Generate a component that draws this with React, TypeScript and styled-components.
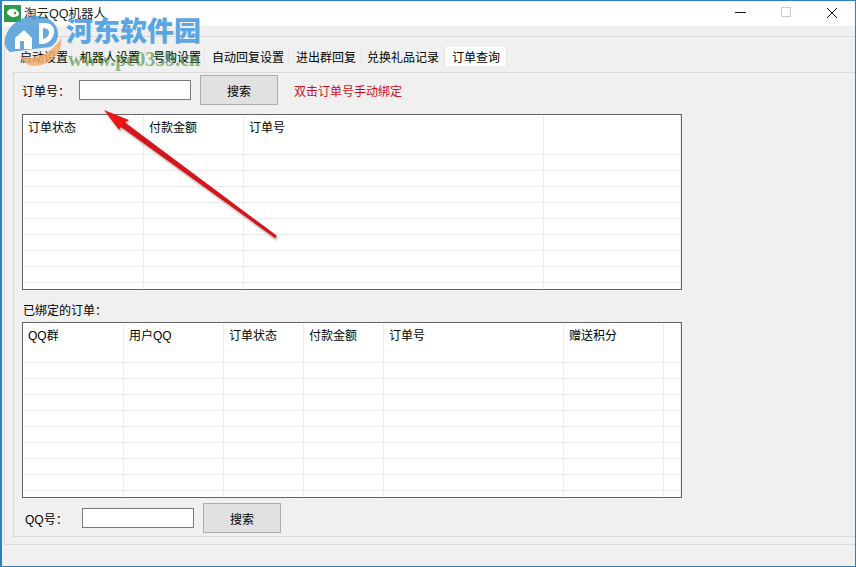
import React from "react"
import styled, { createGlobalStyle } from "styled-components"

const GlobalStyle = createGlobalStyle`
  html, body {
    margin: 0;
    padding: 0;
    overflow: hidden;
    background: #f0f0f0;
  }
  body, button, input {
    font-family: "Liberation Sans", "Noto Sans CJK SC", sans-serif;
    font-size: 12px;
    color: #000;
  }
`

const Window = styled.div`
  position: relative;
  box-sizing: border-box;
  width: 856px;
  height: 567px;
  display: flex;
  flex-direction: column;
  background: #f0f0f0;
  border-style: solid;
  border-color: #2b80c0;
  border-width: 1px 1px 1px 2px;
  overflow: hidden;
`

const TitleBar = styled.div`
  height: 25px;
  flex: none;
  background: #fff;
  display: flex;
  align-items: center;
  padding-left: 2px;
`

const TitleText = styled.span`
  margin: 0 0 2px 3px;
  font-size: 12.5px;
  color: #222;
`

const WindowButtons = styled.div`
  margin-left: auto;
  display: flex;
  height: 100%;
`

const WindowButton = styled.div`
  width: 46px;
  display: flex;
  align-items: center;
  justify-content: center;
  padding-bottom: 2px;
`

const Frame = styled.div`
  flex: 1;
  margin: 10px 0 21px 2px;
  border-style: solid;
  border-color: #d9d9d9;
  border-width: 1px 0 1px 1px;
  display: flex;
  flex-direction: column;
`

const TabRow = styled.div`
  flex: none;
  height: 25px;
  margin-top: 10px;
  padding-left: 9px;
  display: flex;
  align-items: flex-start;
`

const Tab = styled.div<{ $width: number; $pad: number; $active?: boolean }>`
  box-sizing: border-box;
  width: ${(p) => p.$width}px;
  height: 19px;
  padding-left: ${(p) => p.$pad}px;
  line-height: 22px;
  white-space: nowrap;
  background: ${(p) => (p.$active ? "#fff" : "transparent")};
  border-right: 1px solid #e4e4e4;
`

const Panel = styled.div`
  flex: 1;
  margin: 0 0 7px 8px;
  padding: 2px 0 0 8px;
  border-style: solid;
  border-color: #d9d9d9;
  border-width: 1px 0 1px 1px;
`

const SearchRow = styled.div<{ $indent?: number; $top?: number }>`
  height: 30px;
  display: flex;
  align-items: center;
  margin-top: ${(p) => p.$top || 0}px;
  padding-left: ${(p) => p.$indent || 0}px;
`

const FieldLabel = styled.label<{ $width: number }>`
  width: ${(p) => p.$width}px;
  flex: none;
`

const TextInput = styled.input`
  box-sizing: border-box;
  width: 112px;
  height: 20px;
  padding: 0 3px;
  border: 1px solid #7a7a7a;
  background: #fff;
  outline: none;
`

const SearchButton = styled.button`
  box-sizing: border-box;
  width: 78px;
  height: 30px;
  margin-left: 9px;
  padding: 0;
  background: #e1e1e1;
  border: 1px solid #adadad;
`

const Hint = styled.span`
  margin-left: 16px;
  color: #c8101c;
`

const TableBox = styled.div<{ $top?: number }>`
  box-sizing: border-box;
  width: 660px;
  height: 176px;
  margin-top: ${(p) => p.$top || 0}px;
  background: #fff;
  border: 1px solid #646464;
  overflow: hidden;
`

const Table = styled.table`
  border-collapse: separate;
  border-spacing: 0;
  table-layout: fixed;
`

const HeadCell = styled.th`
  box-sizing: border-box;
  height: 40px;
  padding: 5px 0 0 5px;
  vertical-align: top;
  text-align: left;
  font-weight: normal;
  line-height: 16px;
  border-right: 1px solid #ededed;
  border-bottom: 1px solid #ededed;
`

const BodyCell = styled.td`
  box-sizing: border-box;
  height: 16px;
  padding: 0;
  border-right: 1px solid #ededed;
  border-bottom: 1px solid #ededed;
`

const SectionLabel = styled.div`
  height: 32px;
  padding: 11px 0 0 1px;
  box-sizing: border-box;
  line-height: 21px;
`

const Watermark = styled.div`
  position: absolute;
  left: 64px;
  top: 11px;
  color: #5aa6e2;
  font-family: "Noto Sans CJK SC", sans-serif;
  font-size: 27px;
  font-weight: 900;
  line-height: 36px;
  white-space: nowrap;
`

const WatermarkUrl = styled.div`
  position: absolute;
  left: 66px;
  top: 47px;
  color: rgba(64, 140, 50, 0.62);
  font-family: "Liberation Serif", serif;
  font-size: 20px;
  font-weight: bold;
  line-height: 22px;
  white-space: nowrap;
`

const Overlay = styled.svg`
  position: absolute;
  left: -2px;
  top: -1px;
  pointer-events: none;
`

type GridProps = { columns: { title: string; width: number }[]; rows: number }

const Grid = ({ columns, rows }: GridProps) => (
  <Table>
    <colgroup>
      {columns.map((c, i) => (
        <col key={i} style={{ width: c.width }} />
      ))}
    </colgroup>
    <thead>
      <tr>
        {columns.map((c, i) => (
          <HeadCell key={i}>{c.title}</HeadCell>
        ))}
      </tr>
    </thead>
    <tbody>
      {Array.from({ length: rows }).map((_, r) => (
        <tr key={r}>
          {columns.map((_c, i) => (
            <BodyCell key={i} />
          ))}
        </tr>
      ))}
    </tbody>
  </Table>
)

const orderColumns = [
  { title: "订单状态", width: 121 },
  { title: "付款金额", width: 100 },
  { title: "订单号", width: 300 },
  { title: "", width: 137 },
]

const boundColumns = [
  { title: "QQ群", width: 101 },
  { title: "用户QQ", width: 100 },
  { title: "订单状态", width: 80 },
  { title: "付款金额", width: 80 },
  { title: "订单号", width: 180 },
  { title: "赠送积分", width: 100 },
  { title: "", width: 17 },
]

const tabs = [
  { label: "启动设置", width: 58, pad: 6 },
  { label: "机器人设置", width: 73, pad: 8 },
  { label: "号购设置", width: 60, pad: 8 },
  { label: "自动回复设置", width: 84, pad: 7 },
  { label: "进出群回复", width: 73, pad: 7 },
  { label: "兑换礼品记录", width: 83, pad: 5 },
  { label: "订单查询", width: 62, pad: 7, active: true },
]

const AppIcon = () => (
  <svg width="17" height="17" viewBox="0 0 17 17">
    <rect width="17" height="17" fill="#2a9a4c" />
    <path d="M3 7c1-3 5-4 8-3 2 1 4 3 4 5 0 2-3 3-6 3-2 0-3-1-4-2-1 0-2-1-2-3z" fill="#fff" />
    <circle cx="11" cy="8" r="1.2" fill="#2a9a4c" />
  </svg>
)

const App = () => (
  <>
    <GlobalStyle />
    <Window>
      <TitleBar>
        <AppIcon />
        <TitleText>淘云QQ机器人</TitleText>
        <WindowButtons>
          <WindowButton>
            <svg width="11" height="11" viewBox="0 0 11 11">
              <path d="M0 5.5h11" stroke="#111" strokeWidth="1" />
            </svg>
          </WindowButton>
          <WindowButton>
            <svg width="11" height="11" viewBox="0 0 11 11">
              <rect x="0.5" y="0.5" width="9" height="9" fill="none" stroke="#ccc" />
            </svg>
          </WindowButton>
          <WindowButton>
            <svg width="12" height="12" viewBox="0 0 12 12">
              <path d="M1 1l10 10M11 1L1 11" stroke="#111" strokeWidth="1" />
            </svg>
          </WindowButton>
        </WindowButtons>
      </TitleBar>
      <Frame>
        <TabRow>
          {tabs.map((t) => (
            <Tab key={t.label} $width={t.width} $pad={t.pad} $active={t.active}>
              {t.label}
            </Tab>
          ))}
        </TabRow>
        <Panel>
          <SearchRow>
            <FieldLabel $width={57}>订单号：</FieldLabel>
            <TextInput />
            <SearchButton>搜索</SearchButton>
            <Hint>双击订单号手动绑定</Hint>
          </SearchRow>
          <TableBox $top={9}>
            <Grid columns={orderColumns} rows={9} />
          </TableBox>
          <SectionLabel>已绑定的订单：</SectionLabel>
          <TableBox>
            <Grid columns={boundColumns} rows={9} />
          </TableBox>
          <SearchRow $indent={3} $top={5}>
            <FieldLabel $width={57}>QQ号：</FieldLabel>
            <TextInput />
            <SearchButton>搜索</SearchButton>
          </SearchRow>
        </Panel>
      </Frame>

      <Overlay width="856" height="567" viewBox="0 0 856 567">
        <defs>
          <filter id="arrowShadow" x="-20%" y="-20%" width="140%" height="140%">
            <feDropShadow dx="1" dy="2" stdDeviation="1.2" floodColor="#666" floodOpacity="0.5" />
          </filter>
        </defs>
        <g opacity="0.82">
          <path d="M5 40C7 26 20 16 35 16c13 0 23 7 23 18 0 6-3 11-8 13L10 52C6 49 4 45 5 40z" fill="#4a9ad8" />
          <path d="M15 49V38l9-8 8 8v11z" fill="#fff" />
          <path d="M20 41h4v8h-4z" fill="#4a9ad8" />
          <path d="M39 23h5c8 0 11 5 10 10-1 6-5 10-11 11h-4z" fill="#fff" />
          <path d="M43 28c5 0 6 3 6 5s-2 5-6 6z" fill="#4a9ad8" />
          <path d="M20 56c14 5 32-2 41-18 3 14-11 28-27 28-6 0-11-4-14-10z" fill="#f3ab66" />
        </g>
        <g filter="url(#arrowShadow)">
          <path d="M277 235.800L275 238.200L120.200 126.400L123.800 121.600z" fill="#d4181a" />
          <path d="M104 110L129 120L123 124L119 130z" fill="#f01214" />
        </g>
      </Overlay>
      <Watermark>河东软件园</Watermark>
      <WatermarkUrl>www.pc0359.cn</WatermarkUrl>
    </Window>
  </>
)

export default App
